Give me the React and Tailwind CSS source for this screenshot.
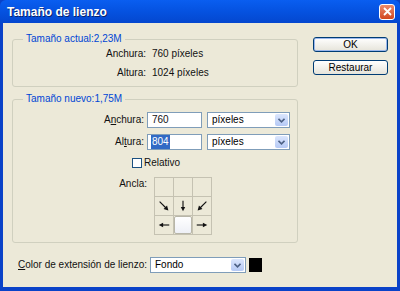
// Canvas size dialog (XP style)
const font = { fontFamily: '"Liberation Sans", Arial, sans-serif' };

function XpSelect({ value, width }) {
  return (
    <div className={`flex h-[16px] ${width} items-center border border-[#7f9db9] bg-white`}>
      <span className="flex-1 pl-[4px] text-[10px] leading-none text-black">{value}</span>
      <span className="m-[1px] flex h-[12px] w-[13px] items-center justify-center rounded-[2px] bg-gradient-to-b from-[#dbe6fd] to-[#b5c9f5]">
        <svg width="7" height="5" viewBox="0 0 7 5">
          <path d="M0.5 0.8 L3.5 3.8 L6.5 0.8" fill="none" stroke="#4d6185" strokeWidth="1.6" />
        </svg>
      </span>
    </div>
  );
}

function XpButton({ label, isDefault }) {
  return (
    <button
      className={`flex h-[15px] w-[75px] items-center justify-center rounded-[3px] border bg-gradient-to-b from-white to-[#e6e4da] text-[10px] leading-none text-black ${
        isDefault ? 'border-[#003c74] shadow-[inset_0_0_0_1px_#9bb7ec]' : 'border-[#003c74]'
      }`}
    >
      {label}
    </button>
  );
}

// Anchor arrows, indexed by cell: [shaft, head]
const arrows = {
  3: ['M3 3 L10 10', '13,13 7.5,11.5 11.5,7.5'],
  4: ['M8 2 L8 10', '8,14 5.5,9 10.5,9'],
  5: ['M13 3 L6 10', '3,13 4.5,7.5 8.5,11.5'],
  6: ['M14 8 L6 8', '2,8 7,5.5 7,10.5'],
  8: ['M2 8 L10 8', '14,8 9,5.5 9,10.5'],
};

function AnchorGrid() {
  return (
    <div className="grid grid-cols-[18px_18px_18px] grid-rows-[18px_18px_18px] gap-px border border-[#c5c2b2] bg-[#c5c2b2]">
      {[0, 1, 2, 3, 4, 5, 6, 7, 8].map((i) => (
        <div key={i} className="flex items-center justify-center bg-[#ece9d8]">
          {i === 7 ? (
            <div className="h-[18px] w-[18px] rounded-[2px] border border-[#b8b6a8] bg-gradient-to-b from-white to-[#eef0f6]" />
          ) : arrows[i] ? (
            <svg width="14" height="14" viewBox="0 0 16 16">
              <path d={arrows[i][0]} fill="none" stroke="#111" strokeWidth="1.3" />
              <polygon points={arrows[i][1]} fill="#111" />
            </svg>
          ) : null}
        </div>
      ))}
    </div>
  );
}

export default function App() {
  return (
    <div className="flex h-[291px] w-[400px] flex-col bg-[#0a42c8]" style={font}>
      {/* Title bar */}
      <div className="flex h-[23px] items-center justify-between rounded-t-[6px] bg-gradient-to-b from-[#0a5ef0] via-[#0552e0] to-[#0447cf] pl-[7px] pr-[5px]">
        <span className="text-[12px] font-bold text-white [text-shadow:1px_1px_0_#0a246a]">Tamaño de lienzo</span>
        <span className="flex h-[16px] w-[16px] items-center justify-center rounded-[3px] border border-white bg-gradient-to-b from-[#e98a6c] to-[#d2461b]">
          <svg width="9" height="9" viewBox="0 0 9 9">
            <path d="M1 1 L8 8 M8 1 L1 8" stroke="white" strokeWidth="1.8" />
          </svg>
        </span>
      </div>

      {/* Body */}
      <div className="mx-[3px] mb-[4px] flex flex-1 flex-col bg-[#ece9d8] pl-[9px] pt-[10px] text-[10px] leading-none text-[#111]">
        <div className="flex">
          <div className="flex w-[286px] flex-col">
            {/* Current size */}
            <fieldset className="h-[54px] rounded-[3px] border border-[#d0d0bf]">
              <legend className="ml-[10px] px-[3px] text-[10px] leading-[12px] text-[#0046d5]">Tamaño actual:2,23M</legend>
              <div className="mt-[4px] grid grid-cols-[133px_1fr] gap-x-[6px] gap-y-[9px]">
                <span className="text-right">Anchura:</span>
                <span>760 píxeles</span>
                <span className="text-right">Altura:</span>
                <span>1024 píxeles</span>
              </div>
            </fieldset>

            {/* New size */}
            <fieldset className="mt-[6px] h-[150px] rounded-[3px] border border-[#d0d0bf]">
              <legend className="ml-[10px] px-[3px] text-[10px] leading-[12px] text-[#0046d5]">Tamaño nuevo:1,75M</legend>
              <div className="mt-[7px] flex flex-col gap-[6px]">
                <div className="flex items-center">
                  <span className="w-[134px] pr-[3px] text-right">A<span className="underline">n</span>chura:</span>
                  <div className="flex h-[16px] w-[55px] items-center border border-[#7f9db9] bg-white pl-[4px]">760</div>
                  <div className="ml-[5px]"><XpSelect value="píxeles" width="w-[83px]" /></div>
                </div>
                <div className="flex items-center">
                  <span className="w-[134px] pr-[3px] text-right">Al<span className="underline">t</span>ura:</span>
                  <div className="flex h-[16px] w-[55px] items-center border border-[#7f9db9] bg-white pl-[3px]">
                    <span className="bg-[#316ac5] px-px py-[2px] text-white">804</span>
                  </div>
                  <div className="ml-[5px]"><XpSelect value="píxeles" width="w-[83px]" /></div>
                </div>
              </div>
              <div className="mt-[8px] flex items-center pl-[119px]">
                <span className="h-[10px] w-[10px] border border-[#1c5180] bg-white" />
                <span className="ml-[2px]">Relativo</span>
              </div>
              <div className="mt-[9px] flex items-start pl-[106px]">
                <span className="mt-[2px] w-[28px] text-right">Ancla:</span>
                <div className="ml-[7px]"><AnchorGrid /></div>
              </div>
            </fieldset>
          </div>

          {/* Buttons */}
          <div className="ml-[15px] mt-[4px] flex flex-col gap-[8px]">
            <XpButton label="OK" isDefault />
            <XpButton label="Restaurar" />
          </div>
        </div>

        {/* Extension colour */}
        <div className="mt-[14px] flex items-center pl-[6px]">
          <span className="w-[132px]"><span className="underline">C</span>olor de extensión de lienzo:</span>
          <XpSelect value="Fondo" width="w-[96px]" />
          <span className="ml-[3px] h-[14px] w-[13px] bg-black" />
        </div>
      </div>
    </div>
  );
}
